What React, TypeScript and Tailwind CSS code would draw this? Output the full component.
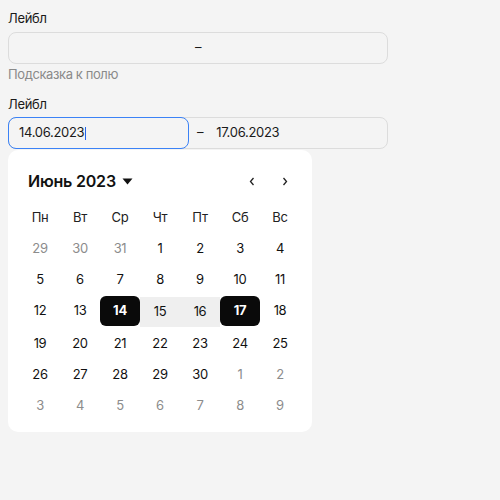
import React from "react";

const weeks: { d: number; muted?: boolean }[][] = [
  [{ d: 29, muted: true }, { d: 30, muted: true }, { d: 31, muted: true }, { d: 1 }, { d: 2 }, { d: 3 }, { d: 4 }],
  [{ d: 5 }, { d: 6 }, { d: 7 }, { d: 8 }, { d: 9 }, { d: 10 }, { d: 11 }],
  [{ d: 12 }, { d: 13 }, { d: 14 }, { d: 15 }, { d: 16 }, { d: 17 }, { d: 18 }],
  [{ d: 19 }, { d: 20 }, { d: 21 }, { d: 22 }, { d: 23 }, { d: 24 }, { d: 25 }],
  [{ d: 26 }, { d: 27 }, { d: 28 }, { d: 29 }, { d: 30 }, { d: 1, muted: true }, { d: 2, muted: true }],
  [{ d: 3, muted: true }, { d: 4, muted: true }, { d: 5, muted: true }, { d: 6, muted: true }, { d: 7, muted: true }, { d: 8, muted: true }, { d: 9, muted: true }],
];

const days = ["Пн", "Вт", "Ср", "Чт", "Пт", "Сб", "Вс"];

export default function App() {
  return (
    <div
      className="min-h-[500px] w-[500px] bg-[#f4f4f4] px-2 pt-2 text-[13px] tracking-[-0.3px] text-[#1a1a1a]"
      style={{ fontFamily: "Inter, 'Noto Sans', sans-serif" }}
    >
      <div className="h-5 leading-5">Лейбл</div>
      <div className="mt-1 flex h-8 w-[380px] items-center justify-center rounded-lg border border-[#dcdcdc] bg-[#f4f4f4]">
        <span>–</span>
      </div>
      <div className="h-5 leading-5 tracking-[-0.4px] text-[#8a8a8a]">Подсказка к полю</div>
      <div className="mt-[10px] h-5 leading-5">Лейбл</div>
      <div className="mt-[3px] flex h-8 w-[380px] rounded-lg border border-[#dcdcdc]">
        <div className="-m-px flex h-8 w-[181px] items-center rounded-lg border border-[#3b82f6] pl-[10px]">
          <span>14.06.2023</span>
          <span className="ml-px inline-block h-[13px] w-px bg-[#2563eb]" />
        </div>
        <div className="flex items-center pl-[9px]">
          <span>–</span>
          <span className="ml-[13px]">17.06.2023</span>
        </div>
      </div>
      <div className="mt-px w-[304px] rounded-[10px] bg-white px-3 pb-[11px] pt-[15px]">
        <div className="flex h-8 items-center pl-2">
          <span className="text-[16px] font-semibold tracking-[-0.2px] text-[#111]">Июнь 2023</span>
          <svg width="11" height="7" viewBox="0 0 11 7" className="ml-[6px] mt-px">
            <path d="M0.5 0.5 L10.5 0.5 L5.5 6.5 Z" fill="#111" />
          </svg>
          <div className="ml-auto flex items-center">
            <div className="flex w-8 items-center justify-center">
              <svg width="6" height="9" viewBox="0 0 6 9">
                <path d="M4.5 1 L1.5 4.5 L4.5 8" stroke="#222" strokeWidth="1.3" fill="none" />
              </svg>
            </div>
            <div className="flex w-8 items-center justify-center pl-[1px]">
              <svg width="6" height="9" viewBox="0 0 6 9">
                <path d="M1.5 1 L4.5 4.5 L1.5 8" stroke="#222" strokeWidth="1.3" fill="none" />
              </svg>
            </div>
          </div>
        </div>
        <div className="mt-[6px] grid grid-cols-7 gap-y-px text-[13px]">
          {days.map((d) => (
            <div key={d} className="flex h-[30px] items-center justify-center text-[#222]">
              {d}
            </div>
          ))}
          {weeks.flat().map((c, i) => {
            const sel = !c.muted && (c.d === 14 || c.d === 17);
            const inRange = !c.muted && (c.d === 15 || c.d === 16);
            return (
              <div
                key={i}
                className={
                  "flex h-[30px] items-center justify-center " +
                  (sel
                    ? "rounded-md bg-[#0a0a0a] font-bold text-white"
                    : inRange
                    ? "my-px h-[28px] bg-[#efefef] text-[#111]"
                    : c.muted
                    ? "text-[#8c8c8c]"
                    : "text-[#111]")
                }
              >
                {c.d}
              </div>
            );
          })}
        </div>
      </div>
    </div>
  );
}
